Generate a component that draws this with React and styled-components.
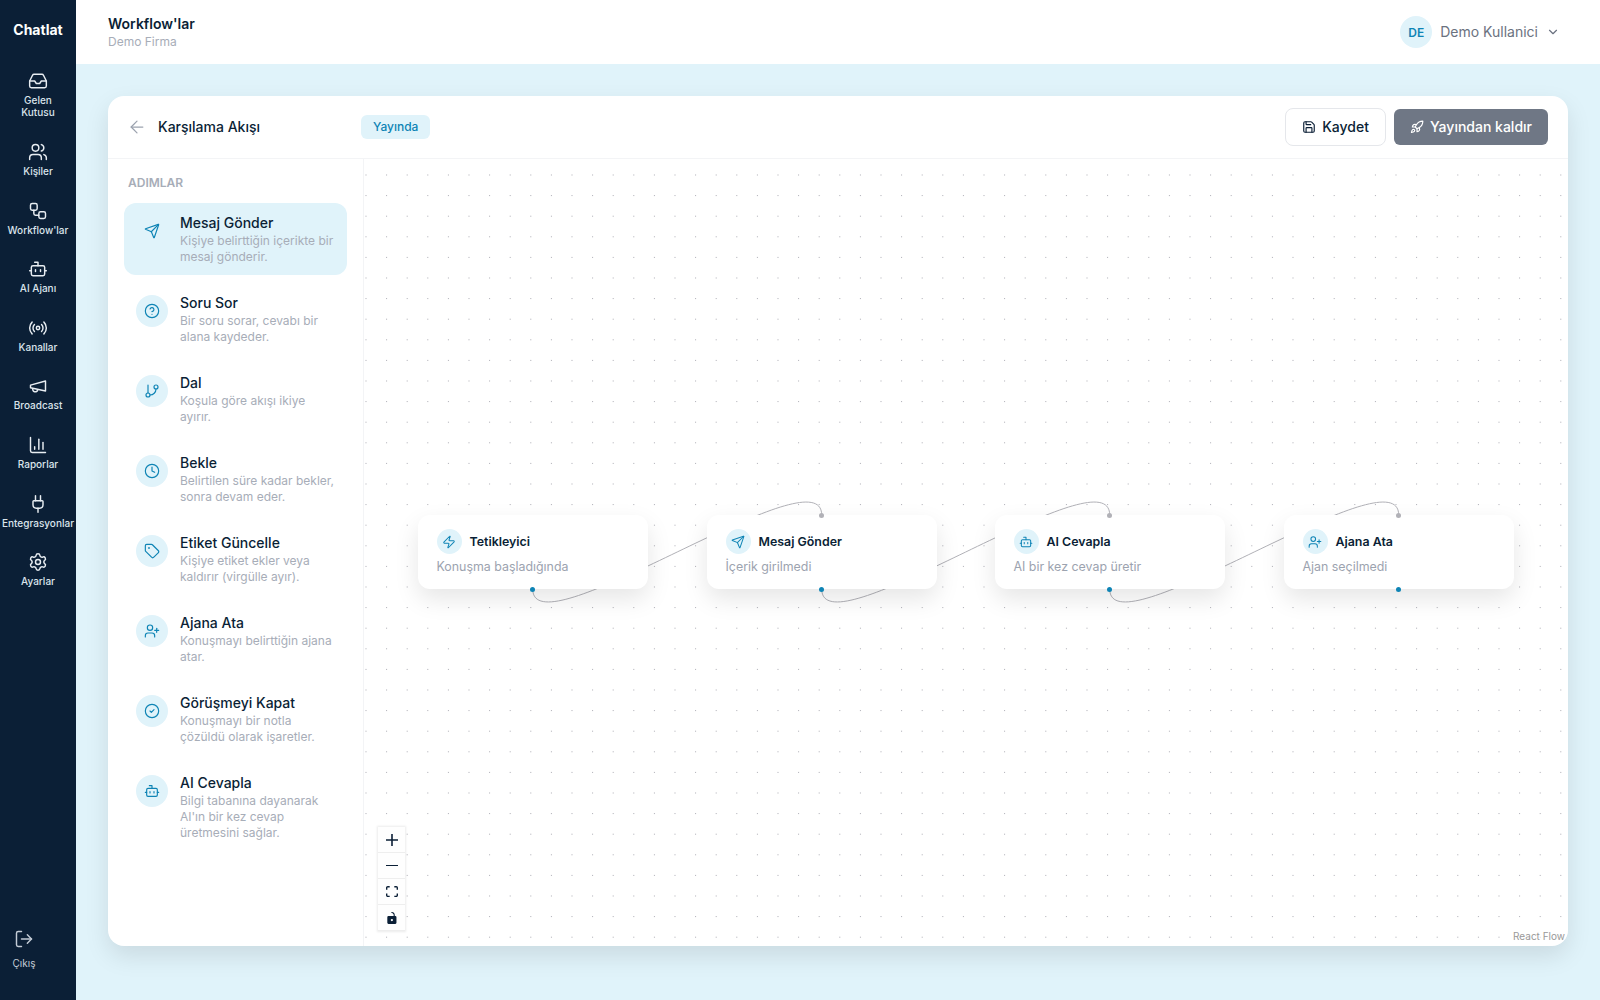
import styled, { createGlobalStyle } from 'styled-components'
import {
    ArrowLeft, Bot, ChartColumn, ChevronDown, CircleCheck, CircleHelp, Clock, GitBranch, Inbox, LogOut,
    Plug, Radio, Rocket, Save, Send, Settings, Tag, UserPlus, Users, Workflow, Zap,
} from 'lucide-react'

// the newer lucide megaphone has another shape, so this one is drawn by hand
const Megaphone = ({ size, strokeWidth }) => (
    <svg width={size} height={size} viewBox="0 0 24 24" fill="none" stroke="currentColor" strokeWidth={strokeWidth} strokeLinecap="round" strokeLinejoin="round">
        <path d="m3 11 18-5v12L3 14v-3z" />
        <path d="M11.6 16.8a3 3 0 1 1-5.8-1.6" />
    </svg>
)

const navItems = [
    { label: "Gelen\nKutusu", icon: Inbox },
    { label: "Kişiler", icon: Users },
    { label: "Workflow'lar", icon: Workflow },
    { label: "AI Ajanı", icon: Bot },
    { label: "Kanallar", icon: Radio },
    { label: "Broadcast", icon: Megaphone },
    { label: "Raporlar", icon: ChartColumn },
    { label: "Entegrasyonlar", icon: Plug },
    { label: "Ayarlar", icon: Settings },
]

const steps = [
    { title: "Mesaj Gönder", text: "Kişiye belirttiğin içerikte bir mesaj gönderir.", icon: Send, active: true },
    { title: "Soru Sor", text: "Bir soru sorar, cevabı bir alana kaydeder.", icon: CircleHelp },
    { title: "Dal", text: "Koşula göre akışı ikiye ayırır.", icon: GitBranch },
    { title: "Bekle", text: "Belirtilen süre kadar bekler, sonra devam eder.", icon: Clock },
    { title: "Etiket Güncelle", text: "Kişiye etiket ekler veya kaldırır (virgülle ayır).", icon: Tag },
    { title: "Ajana Ata", text: "Konuşmayı belirttiğin ajana atar.", icon: UserPlus },
    { title: "Görüşmeyi Kapat", text: "Konuşmayı bir notla çözüldü olarak işaretler.", icon: CircleCheck },
    { title: "AI Cevapla", text: "Bilgi tabanına dayanarak AI'ın bir kez cevap üretmesini sağlar.", icon: Bot },
]

// node positions are relative to the canvas, like react flow does it
const nodes = [
    { title: "Tetikleyici", text: "Konuşma başladığında", icon: Zap, x: 54, y: 356, first: true },
    { title: "Mesaj Gönder", text: "İçerik girilmedi", icon: Send, x: 343, y: 356 },
    { title: "AI Cevapla", text: "AI bir kez cevap üretir", icon: Bot, x: 631, y: 356 },
    { title: "Ajana Ata", text: "Ajan seçilmedi", icon: UserPlus, x: 920, y: 356 },
]

const NODE_W = 230
const NODE_H = 74
const HANDLE_X = NODE_W / 2 - 0.3

const edgePath = (a, b) => {
    const sx = a.x + HANDLE_X
    const sy = a.y + NODE_H
    const tx = b.x + HANDLE_X
    const ty = b.y
    const c = 65
    return `M${sx},${sy} C${sx},${sy + c} ${tx},${ty - c} ${tx},${ty}`
}

const App = () => {
    return (
        <Shell>
            <GlobalStyle />
            <Sidebar>
                <Logo>Chatlat</Logo>
                <Nav>
                    {navItems.map((item) => (
                        <NavItem key={item.label}>
                            <item.icon size={20} strokeWidth={1.75} />
                            <span>{item.label}</span>
                        </NavItem>
                    ))}
                </Nav>
                <Logout>
                    <LogOut size={20} strokeWidth={1.75} />
                    <span>Çıkış</span>
                </Logout>
            </Sidebar>
            <Page>
                <TopBar>
                    <div>
                        <PageTitle>Workflow'lar</PageTitle>
                        <Company>Demo Firma</Company>
                    </div>
                    <UserMenu>
                        <Avatar>DE</Avatar>
                        <UserName>Demo Kullanici</UserName>
                        <ChevronDown size={14} color="#6b7280" />
                    </UserMenu>
                </TopBar>
                <Main>
                    <Card>
                        <CardHead>
                            <BackBtn><ArrowLeft size={20} strokeWidth={1.5} /></BackBtn>
                            <FlowName>Karşılama Akışı</FlowName>
                            <Badge>Yayında</Badge>
                            <Actions>
                                <SaveBtn><Save size={14} />Kaydet</SaveBtn>
                                <PublishBtn><Rocket size={14} />Yayından kaldır</PublishBtn>
                            </Actions>
                        </CardHead>
                        <CardBody>
                            <Palette>
                                <PaletteLabel>ADIMLAR</PaletteLabel>
                                <StepList>
                                    {steps.map((step) => (
                                        <Step key={step.title} $active={step.active}>
                                            <StepIcon><step.icon size={16} strokeWidth={1.75} /></StepIcon>
                                            <div>
                                                <StepTitle>{step.title}</StepTitle>
                                                <StepText>{step.text}</StepText>
                                            </div>
                                        </Step>
                                    ))}
                                </StepList>
                            </Palette>
                            <Canvas>
                                <FlowSvg>
                                    <defs>
                                        <pattern id="dots" x="1.5" y="15.5" width="20.6" height="20.6" patternUnits="userSpaceOnUse">
                                            <circle cx="0.5" cy="0.5" r="0.55" fill="#a3a3ab" />
                                        </pattern>
                                    </defs>
                                    <rect width="100%" height="100%" fill="url(#dots)" />
                                    {nodes.slice(1).map((n, i) => (
                                        <path key={n.title} d={edgePath(nodes[i], n)} fill="none" stroke="#b1b1b7" strokeWidth="1" />
                                    ))}
                                </FlowSvg>
                                {nodes.map((n) => (
                                    <Node key={n.title} $x={n.x} $y={n.y}>
                                        {!n.first && <Handle $top />}
                                        <NodeHead>
                                            <NodeIcon><n.icon size={14} strokeWidth={1.75} /></NodeIcon>
                                            <NodeTitle>{n.title}</NodeTitle>
                                        </NodeHead>
                                        <NodeText>{n.text}</NodeText>
                                        <Handle />
                                    </Node>
                                ))}
                                <Controls>
                                    <ControlBtn>
                                        <svg viewBox="0 0 32 32"><path d="M32 18.133H18.133V32h-4.266V18.133H0v-4.266h13.867V0h4.266v13.867H32z" /></svg>
                                    </ControlBtn>
                                    <ControlBtn>
                                        <svg viewBox="0 0 32 5"><path d="M0 0h32v4.2H0z" /></svg>
                                    </ControlBtn>
                                    <ControlBtn>
                                        <svg viewBox="0 0 32 30"><path d="M3.692 4.63c0-.53.4-.938.939-.938h5.215V0H4.708C2.13 0 0 2.054 0 4.63v5.216h3.692V4.631zM27.354 0h-5.2v3.692h5.17c.53 0 .984.4.984.939v5.215H32V4.631A4.624 4.624 0 0027.354 0zm.954 24.83c0 .532-.4.94-.939.94h-5.215v3.768h5.215c2.577 0 4.631-2.13 4.631-4.707v-5.139h-3.692v5.139zm-23.677.94c-.531 0-.939-.4-.939-.94v-5.138H0v5.139c0 2.577 2.13 4.707 4.708 4.707h5.138V25.77H4.631z" /></svg>
                                    </ControlBtn>
                                    <ControlBtn>
                                        <svg viewBox="0 0 25 32"><path d="M21.333 10.667H19.81V7.619C19.81 3.429 16.38 0 12.19 0c-4.114 0-1.37 2.133.305 2.438 1.676.305 4.42 2.59 4.42 5.181v3.048H3.047A3.056 3.056 0 000 13.714v15.238A3.056 3.056 0 003.048 32h18.285a3.056 3.056 0 003.048-3.048V13.714a3.056 3.056 0 00-3.048-3.047zM12.19 24.533a3.056 3.056 0 01-3.047-3.047 3.056 3.056 0 013.047-3.048 3.056 3.056 0 013.048 3.048 3.056 3.056 0 01-3.048 3.047z" /></svg>
                                    </ControlBtn>
                                </Controls>
                                <Attribution>React Flow</Attribution>
                            </Canvas>
                        </CardBody>
                    </Card>
                </Main>
            </Page>
        </Shell>
    )
}

const GlobalStyle = createGlobalStyle`
    * { box-sizing: border-box; }
    body {
        margin: 0;
        font-family: Inter, "Noto Sans", sans-serif;
        color: #0b1f36;
    }
`;

const Shell = styled.div`
    display: flex;
    height: 100vh;
    overflow: hidden;
`;

const Sidebar = styled.aside`
    width: 76px;
    flex-shrink: 0;
    background: #0b1f36;
    color: #fff;
    display: flex;
    flex-direction: column;
`;

const Logo = styled.div`
    height: 58px;
    display: flex;
    align-items: center;
    justify-content: center;
    font-size: 14px;
    font-weight: 700;
`;

const Nav = styled.nav`
    flex: 1;
    display: flex;
    flex-direction: column;
    gap: 8px;
    padding-top: 5.8px;
`;

const NavItem = styled.a`
    display: flex;
    flex-direction: column;
    align-items: center;
    gap: 3px;
    padding: 7px 0 8px;
    font-size: 10px;
    line-height: 12.6px;
    font-weight: 500;
    text-align: center;
    color: #dbe4ec;

    span { white-space: pre-line; }
    svg { color: #e8edf2; }
`;

const Logout = styled.a`
    width: 48px;
    display: flex;
    flex-direction: column;
    align-items: center;
    gap: 8px;
    margin-bottom: 31px;
    font-size: 10px;
    line-height: 12px;
    color: #c4ccd6;
`;

const Page = styled.div`
    flex: 1;
    min-width: 0;
    display: flex;
    flex-direction: column;
`;

const TopBar = styled.header`
    height: 64px;
    flex-shrink: 0;
    background: #fff;
    display: flex;
    align-items: center;
    justify-content: space-between;
    padding: 0 32px;
`;

const PageTitle = styled.div`
    font-size: 14px;
    line-height: 20px;
    font-weight: 600;
`;

const Company = styled.div`
    font-size: 12px;
    line-height: 16px;
    color: #a7adb8;
`;

const UserMenu = styled.div`
    display: flex;
    align-items: center;
    margin-right: 8px;
`;

const Avatar = styled.div`
    width: 32px;
    height: 32px;
    border-radius: 50%;
    background: #e0f3fa;
    color: #0e84b5;
    font-size: 12px;
    font-weight: 600;
    display: flex;
    align-items: center;
    justify-content: center;
    margin-right: 8px;
`;

const UserName = styled.span`
    font-size: 14px;
    color: #6b7280;
    margin-right: 8px;
    padding-bottom: 2px;
`;

const Main = styled.main`
    flex: 1;
    min-height: 0;
    background: #e0f3fa;
    padding: 32px 32px 54px;
`;

const Card = styled.section`
    height: 100%;
    background: #fff;
    border-radius: 16px;
    box-shadow: 0 10px 25px rgba(0, 0, 0, 0.1);
    display: flex;
    flex-direction: column;
    overflow: hidden;
`;

const CardHead = styled.div`
    height: 63px;
    flex-shrink: 0;
    display: flex;
    align-items: center;
    padding: 0 20px;
    border-bottom: 1px solid #f3f4f6;
`;

const BackBtn = styled.span`
    display: flex;
    color: #9ca3af;
    margin: 0 11px 0 -1px;
`;

const FlowName = styled.div`
    width: 203px;
    font-size: 14px;
    font-weight: 500;
    padding-bottom: 2px;
`;

const Badge = styled.span`
    height: 24px;
    padding: 0 12px 1px;
    border-radius: 6px;
    background: #e0f3fa;
    color: #0e84b5;
    font-size: 12px;
    font-weight: 500;
    display: flex;
    align-items: center;
`;

const Actions = styled.div`
    margin-left: auto;
    display: flex;
    align-items: center;
    gap: 8px;
`;

const SaveBtn = styled.button`
    height: 38px;
    padding: 0 16px 2px;
    display: flex;
    align-items: center;
    gap: 6px;
    font: 500 14px Inter, sans-serif;
    color: #0b1f36;
    background: #fff;
    border: 1px solid #e5e7eb;
    border-radius: 8px;

    svg { margin-top: 2px; }
`;

const PublishBtn = styled.button`
    height: 36px;
    padding: 0 16px 2px;
    display: flex;
    align-items: center;
    gap: 6px;
    font: 500 14px Inter, sans-serif;
    color: #fff;
    background: #6f7785;
    border: 0;
    border-radius: 6px;

    svg { margin-top: 2px; }
`;

const CardBody = styled.div`
    flex: 1;
    min-height: 0;
    display: flex;
`;

const Palette = styled.aside`
    width: 256px;
    flex-shrink: 0;
    padding: 16px;
    border-right: 1px solid #f3f4f6;
`;

const PaletteLabel = styled.div`
    font-size: 12px;
    line-height: 16px;
    font-weight: 600;
    color: #a7adb8;
    padding-left: 4px;
    margin-bottom: 12px;
`;

const StepList = styled.div`
    display: flex;
    flex-direction: column;
    gap: 8px;
`;

const Step = styled.div`
    display: flex;
    gap: 12px;
    padding: 10px 12px;
    border-radius: 12px;
    background: ${(props) => (props.$active ? '#e0f3fa' : 'transparent')};
`;

const StepIcon = styled.div`
    width: 32px;
    height: 32px;
    margin-top: 2px;
    flex-shrink: 0;
    border-radius: 50%;
    background: #e0f3fa;
    color: #0e84b5;
    display: flex;
    align-items: center;
    justify-content: center;
`;

const StepTitle = styled.div`
    font-size: 14px;
    line-height: 20px;
    font-weight: 500;
`;

const StepText = styled.div`
    font-size: 12px;
    line-height: 16px;
    color: #a7adb8;
`;

const Canvas = styled.div`
    flex: 1;
    min-width: 0;
    position: relative;
    overflow: hidden;
`;

const FlowSvg = styled.svg`
    position: absolute;
    inset: 0;
    width: 100%;
    height: 100%;
`;

const Node = styled.div`
    position: absolute;
    left: ${(props) => props.$x}px;
    top: ${(props) => props.$y}px;
    width: ${NODE_W}px;
    height: ${NODE_H}px;
    padding: 14px 18.5px;
    background: #fff;
    border-radius: 12px;
    box-shadow: 0 10px 25px rgba(0, 0, 0, 0.1);
`;

const NodeHead = styled.div`
    display: flex;
    align-items: center;
    gap: 8px;
    margin-bottom: 5px;
`;

const NodeIcon = styled.div`
    width: 25px;
    height: 25px;
    border-radius: 50%;
    background: #e0f3fa;
    color: #0e84b5;
    display: flex;
    align-items: center;
    justify-content: center;
`;

const NodeTitle = styled.div`
    font-size: 12.4px;
    font-weight: 600;
`;

const NodeText = styled.div`
    font-size: 12.4px;
    line-height: 16px;
    color: #9ca3af;
`;

const Handle = styled.span`
    position: absolute;
    left: ${HANDLE_X}px;
    width: 5px;
    height: 5px;
    margin-left: -2.5px;
    border-radius: 50%;
    background: ${(props) => (props.$top ? '#b1b1b7' : '#0e84b5')};
    ${(props) => (props.$top ? 'top: -2.5px;' : 'bottom: -2.5px;')}
`;

const Controls = styled.div`
    position: absolute;
    left: 14px;
    bottom: 15px;
    width: 27px;
    box-shadow: 0 0 2px 1px rgba(0, 0, 0, 0.08);
`;

const ControlBtn = styled.button`
    width: 27px;
    height: 26px;
    padding: 5px;
    display: flex;
    align-items: center;
    justify-content: center;
    background: #fefefe;
    border: 0;
    border-bottom: 1px solid #eee;

    svg { width: 100%; max-width: 12px; max-height: 12px; fill: #0b1f36; }
`;

const Attribution = styled.div`
    position: absolute;
    right: 0;
    bottom: 2px;
    padding: 2px 3px;
    font-size: 10px;
    line-height: 12px;
    color: #999;
    background: rgba(255, 255, 255, 0.5);
`;

export default App;
